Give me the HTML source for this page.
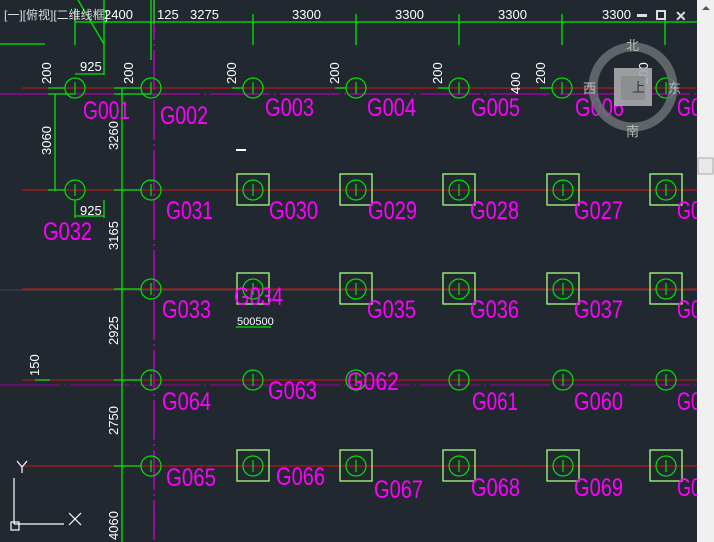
<!DOCTYPE html>
<html><head><meta charset="utf-8"><style>
html,body{margin:0;padding:0;background:#212830;overflow:hidden}
svg{display:block}
.m{fill:#ff00ff;font-family:"Liberation Sans Narrow","Liberation Sans",sans-serif;font-size:25px}
.w{fill:#fff;font-family:"Liberation Sans",sans-serif;font-size:13px}
</style></head><body>
<svg width="714" height="542" viewBox="0 0 714 542" xmlns="http://www.w3.org/2000/svg">
<defs>
<g id="c"><circle r="10" fill="none" stroke="#00e600" stroke-width="1.2"/><line x1="0" y1="-6" x2="0" y2="6" stroke="#00e600" stroke-width="1.2"/></g>
<g id="s"><rect x="-16" y="-16" width="32" height="31" fill="none" stroke="#a6ff80" stroke-width="1.3"/><use href="#c"/></g>
</defs>
<rect width="714" height="542" fill="#212830"/>
<line x1="154" y1="0" x2="154" y2="542" stroke="#c000c0" stroke-width="1.5" stroke-dasharray="40 4 2 4"/>
<line x1="0" y1="94" x2="697" y2="94" stroke="#b000b0" stroke-width="1.2" stroke-dasharray="60 4 2 4"/>
<line x1="0" y1="385" x2="697" y2="385" stroke="#900090" stroke-width="1.2" stroke-dasharray="60 4 2 4"/>
<line x1="0" y1="290" x2="697" y2="290" stroke="#555" stroke-width="0.8"/>
<g stroke="#b01818" stroke-width="1.3">
<line x1="22" y1="88" x2="697" y2="88"/><line x1="22" y1="190" x2="697" y2="190"/>
<line x1="22" y1="289" x2="697" y2="289"/><line x1="22" y1="380" x2="697" y2="380"/>
<line x1="22" y1="466" x2="697" y2="466"/>
</g>
<g stroke="#00e600" stroke-width="1.3" fill="none">
<line x1="75" y1="22" x2="697" y2="22"/>
<line x1="75" y1="8" x2="75" y2="45"/><line x1="104" y1="0" x2="104" y2="75"/>
<line x1="78" y1="0" x2="104" y2="44"/>
<line x1="151" y1="0" x2="151" y2="60"/><line x1="154" y1="0" x2="154" y2="24"/>
<line x1="253" y1="14" x2="253" y2="45"/><line x1="356" y1="14" x2="356" y2="45"/>
<line x1="459" y1="14" x2="459" y2="45"/><line x1="562" y1="14" x2="562" y2="45"/>
<line x1="665" y1="14" x2="665" y2="45"/>
<line x1="0" y1="44" x2="45" y2="44"/>
<line x1="122" y1="88" x2="122" y2="542"/>
<line x1="55" y1="94" x2="55" y2="190"/>
<line x1="75" y1="74" x2="104" y2="74"/><line x1="75" y1="216" x2="104" y2="216"/>
<line x1="75" y1="200" x2="75" y2="218"/><line x1="104" y1="200" x2="104" y2="218"/>
<line x1="48" y1="88" x2="65" y2="88"/><line x1="48" y1="94" x2="75" y2="94"/>
<line x1="114" y1="88" x2="141" y2="88"/><line x1="114" y1="94" x2="151" y2="94"/>
<line x1="48" y1="190" x2="65" y2="190"/><line x1="114" y1="190" x2="141" y2="190"/>
<line x1="114" y1="289" x2="141" y2="289"/><line x1="114" y1="380" x2="141" y2="380"/>
<line x1="114" y1="466" x2="141" y2="466"/><line x1="35" y1="380" x2="50" y2="380"/>
<line x1="232" y1="88" x2="243" y2="88"/><line x1="335" y1="88" x2="346" y2="88"/>
<line x1="438" y1="88" x2="449" y2="88"/><line x1="540" y1="88" x2="552" y2="88"/>
<line x1="236" y1="327" x2="271" y2="327"/>
</g>
<use href="#c" x="75" y="88"/><use href="#c" x="151" y="88"/><use href="#c" x="253" y="88"/>
<use href="#c" x="356" y="88"/><use href="#c" x="459" y="88"/><use href="#c" x="562" y="88"/><use href="#c" x="666" y="88"/>
<use href="#c" x="75" y="190"/><use href="#c" x="151" y="190"/>
<use href="#s" x="253" y="190"/><use href="#s" x="356" y="190"/><use href="#s" x="459" y="190"/><use href="#s" x="563" y="190"/><use href="#s" x="666" y="190"/>
<use href="#c" x="151" y="289"/>
<use href="#s" x="253" y="289"/><use href="#s" x="356" y="289"/><use href="#s" x="459" y="289"/><use href="#s" x="563" y="289"/><use href="#s" x="666" y="289"/>
<use href="#c" x="151" y="380"/><use href="#c" x="253" y="380"/><use href="#c" x="356" y="380"/><use href="#c" x="459" y="380"/><use href="#c" x="563" y="380"/><use href="#c" x="666" y="380"/>
<use href="#c" x="151" y="466"/>
<use href="#s" x="253" y="466"/><use href="#s" x="356" y="466"/><use href="#s" x="459" y="466"/><use href="#s" x="563" y="466"/><use href="#s" x="666" y="466"/>
<rect x="236" y="149" width="10" height="2" fill="#fff"/>
<g class="m">
<text x="83" y="119" textLength="47" lengthAdjust="spacingAndGlyphs">G001</text>
<text x="160" y="124" textLength="48" lengthAdjust="spacingAndGlyphs">G002</text>
<text x="265" y="116" textLength="49" lengthAdjust="spacingAndGlyphs">G003</text>
<text x="367" y="116" textLength="49" lengthAdjust="spacingAndGlyphs">G004</text>
<text x="471" y="116" textLength="49" lengthAdjust="spacingAndGlyphs">G005</text>
<text x="575" y="116" textLength="49" lengthAdjust="spacingAndGlyphs">G006</text>
<text x="677" y="116" textLength="24" lengthAdjust="spacingAndGlyphs">G0</text>
<text x="166" y="219" textLength="47" lengthAdjust="spacingAndGlyphs">G031</text>
<text x="269" y="219" textLength="49" lengthAdjust="spacingAndGlyphs">G030</text>
<text x="368" y="219" textLength="49" lengthAdjust="spacingAndGlyphs">G029</text>
<text x="470" y="219" textLength="49" lengthAdjust="spacingAndGlyphs">G028</text>
<text x="574" y="219" textLength="49" lengthAdjust="spacingAndGlyphs">G027</text>
<text x="677" y="219" textLength="24" lengthAdjust="spacingAndGlyphs">G0</text>
<text x="43" y="240" textLength="49" lengthAdjust="spacingAndGlyphs">G032</text>
<text x="162" y="318" textLength="49" lengthAdjust="spacingAndGlyphs">G033</text>
<text x="234" y="305" textLength="49" lengthAdjust="spacingAndGlyphs">G034</text>
<text x="367" y="318" textLength="49" lengthAdjust="spacingAndGlyphs">G035</text>
<text x="470" y="318" textLength="49" lengthAdjust="spacingAndGlyphs">G036</text>
<text x="574" y="318" textLength="49" lengthAdjust="spacingAndGlyphs">G037</text>
<text x="677" y="318" textLength="24" lengthAdjust="spacingAndGlyphs">G0</text>
<text x="162" y="410" textLength="49" lengthAdjust="spacingAndGlyphs">G064</text>
<text x="268" y="399" textLength="49" lengthAdjust="spacingAndGlyphs">G063</text>
<text x="347" y="390" textLength="52" lengthAdjust="spacingAndGlyphs">G062</text>
<text x="472" y="410" textLength="46" lengthAdjust="spacingAndGlyphs">G061</text>
<text x="574" y="410" textLength="49" lengthAdjust="spacingAndGlyphs">G060</text>
<text x="677" y="410" textLength="24" lengthAdjust="spacingAndGlyphs">G0</text>
<text x="166" y="486" textLength="50" lengthAdjust="spacingAndGlyphs">G065</text>
<text x="276" y="485" textLength="49" lengthAdjust="spacingAndGlyphs">G066</text>
<text x="374" y="498" textLength="49" lengthAdjust="spacingAndGlyphs">G067</text>
<text x="471" y="496" textLength="49" lengthAdjust="spacingAndGlyphs">G068</text>
<text x="574" y="496" textLength="49" lengthAdjust="spacingAndGlyphs">G069</text>
<text x="677" y="496" textLength="24" lengthAdjust="spacingAndGlyphs">G0</text>
</g>
<g class="w">
<text x="4" y="19" font-family="Liberation Sans,Noto Sans CJK SC,sans-serif" font-size="12" fill="#ddd">[一][俯视][二维线框]</text>
<text x="104" y="19">2400</text><text x="157" y="19">125</text><text x="190" y="19">3275</text>
<text x="292" y="19">3300</text><text x="395" y="19">3300</text><text x="498" y="19">3300</text><text x="602" y="19">3300</text>
<text x="80" y="71">925</text><text x="80" y="215">925</text>
<text x="237" y="325" font-size="11">500500</text>
<text transform="translate(51,84) rotate(-90)">200</text>
<text transform="translate(133,84) rotate(-90)">200</text>
<text transform="translate(236,84) rotate(-90)">200</text>
<text transform="translate(339,84) rotate(-90)">200</text>
<text transform="translate(442,84) rotate(-90)">200</text>
<text transform="translate(545,84) rotate(-90)">200</text>
<text transform="translate(520,94) rotate(-90)">400</text>
<text transform="translate(648,84) rotate(-90)">200</text>
<text transform="translate(51,155) rotate(-90)">3060</text>
<text transform="translate(118,150) rotate(-90)">3260</text>
<text transform="translate(118,250) rotate(-90)">3165</text>
<text transform="translate(118,345) rotate(-90)">2925</text>
<text transform="translate(118,435) rotate(-90)">2750</text>
<text transform="translate(118,540) rotate(-90)">4060</text>
<text transform="translate(39,376) rotate(-90)">150</text>
</g>
<g stroke="#fff" stroke-width="1.2" fill="none">
<line x1="14" y1="478" x2="14" y2="524"/><line x1="14" y1="524" x2="64" y2="524"/>
<rect x="11" y="522" width="8" height="8"/>
<line x1="17" y1="461" x2="22" y2="467"/><line x1="27" y1="461" x2="22" y2="467"/><line x1="22" y1="467" x2="22" y2="473"/>
<line x1="69" y1="513" x2="81" y2="525"/><line x1="81" y1="513" x2="69" y2="525"/>
</g>
<rect x="637" y="14" width="10" height="3" fill="#ddd"/>
<rect x="657" y="11" width="8" height="8" fill="none" stroke="#ddd" stroke-width="2"/>
<text x="675" y="21" fill="#ddd" font-family="Liberation Sans,sans-serif" font-size="14" font-weight="bold">✕</text>
<circle cx="633" cy="87" r="40" fill="none" stroke="#6a6e73" stroke-width="9" opacity="0.85"/>
<rect x="614" y="68" width="38" height="38" fill="#a8aaad" opacity="0.9"/>
<rect x="621" y="76" width="24" height="24" fill="#8c8f92"/>
<text x="632" y="92" fill="#333" font-family="Liberation Sans,Noto Sans CJK SC,sans-serif" font-size="13">上</text>
<g fill="#bbb" font-family="Liberation Sans,Noto Sans CJK SC,sans-serif" font-size="13">
<text x="626" y="50">北</text><text x="626" y="136">南</text><text x="583" y="93">西</text><text x="668" y="93">东</text>
</g>
<rect x="697" y="0" width="17" height="542" fill="#f0f0f0"/>
<rect x="698" y="158" width="15" height="16" fill="#e8e8e8" stroke="#aaa"/>
<path d="M702 10 L706 6 L710 10Z" fill="#555"/>
<path d="M702 262 L710 262 L706 266Z" fill="#555" transform="translate(0,0)" display="none"/>
</svg>
</body></html>
